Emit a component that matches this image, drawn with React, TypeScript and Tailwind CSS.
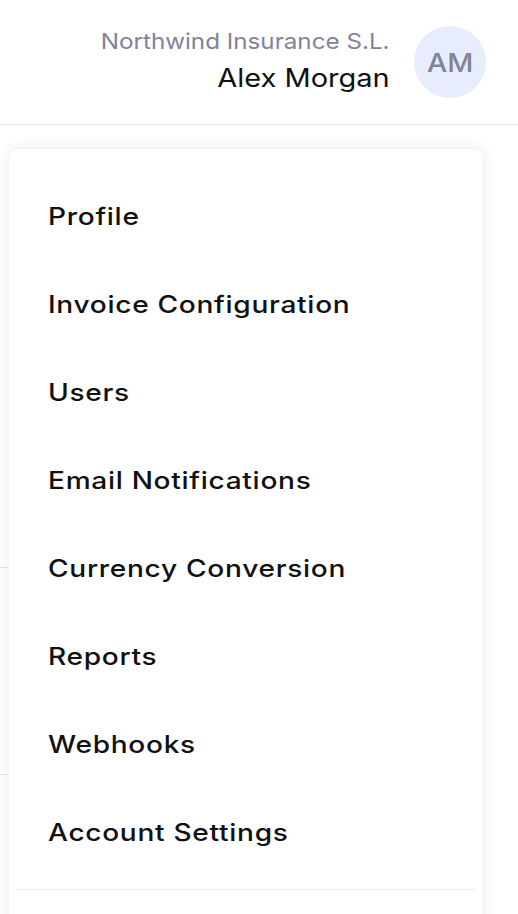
const items = [
  "Profile",
  "Invoice Configuration",
  "Users",
  "Email Notifications",
  "Currency Conversion",
  "Reports",
  "Webhooks",
  "Account Settings",
];

export default function App() {
  return (
    <div
      className="relative w-[518px] h-[914px] overflow-hidden bg-white"
      style={{ fontFamily: "Inter, 'Noto Sans', sans-serif" }}
    >
      {/* Header */}
      <header className="h-[125px] border-b border-[#ececef] flex items-center justify-end pr-8 gap-6">
        <div className="flex flex-col items-end gap-1.5 mb-[4px]">
          <span className="inline-block origin-right scale-x-[1.1] text-[22px] leading-[30px] text-[#82829a]">
            Northwind Insurance S.L.
          </span>
          <span className="inline-block origin-right scale-x-[1.16] text-[25px] leading-[32px] text-[#111]">
            Alex Morgan
          </span>
        </div>
        <div className="w-[72px] h-[72px] rounded-full bg-[#e8edfd] flex items-center justify-center text-[26px] font-medium text-[#82829a]">
          <span className="inline-block scale-x-[1.1]">AM</span>
        </div>
      </header>

      {/* page content behind the menu */}
      <div className="absolute left-0 top-[567px] w-[10px] h-px bg-[#e5e5e8]" />
      <div className="absolute left-0 top-[774px] w-[10px] h-px bg-[#e5e5e8]" />

      {/* Dropdown menu */}
      <div className="absolute left-2 top-[148px] w-[476px] h-[800px] bg-white rounded-[10px] shadow-[0_0_16px_rgba(0,0,0,0.07)] border border-[#f2f2f4]">
        <nav className="flex flex-col items-start pt-[24px] px-[39px]">
          {items.map((label) => (
            <button
              key={label}
              className="h-[88px] text-left text-[24px] font-medium text-[#111] tracking-[0.6px]"
            >
              <span className="inline-block origin-left scale-x-[1.17]">{label}</span>
            </button>
          ))}
        </nav>
        <div className="mx-2 mt-[12px] border-t border-[#ececef]" />
      </div>
    </div>
  );
}
